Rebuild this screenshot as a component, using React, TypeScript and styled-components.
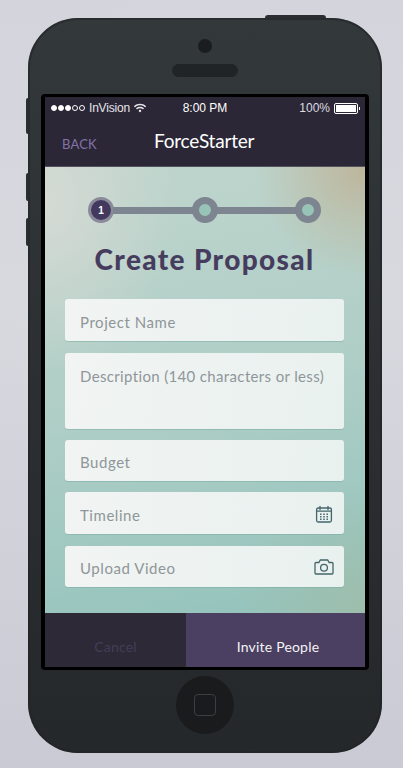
import styled, { createGlobalStyle } from "styled-components";
import { FaWifi } from "react-icons/fa";

const GlobalStyle = createGlobalStyle`
  html, body {
    margin: 0;
    padding: 0;
    background: #d0d1d9;
  }
  * {
    box-sizing: border-box;
  }
`;

const Page = styled.div`
  width: 403px;
  height: 768px;
  overflow: hidden;
  padding: 18px 21px 15px 28px;
  background:
    radial-gradient(ellipse at 50% 45%, rgba(255, 255, 255, 0.12), rgba(255, 255, 255, 0) 70%),
    linear-gradient(180deg, #d4d5dc 0%, #d8d9df 40%, #c9cad3 100%);
`;

const Phone = styled.div`
  position: relative;
  width: 354px;
  height: 735px;
  border-radius: 50px;
  background: linear-gradient(180deg, #33383a 0%, #2c3032 45%, #25282a 100%);
  box-shadow: inset 0 0 0 2px rgba(31, 34, 36, 0.55);
  display: flex;
  flex-direction: column;
  align-items: center;
`;

const TopButton = styled.div`
  position: absolute;
  top: -3px;
  left: 237px;
  width: 61px;
  height: 3px;
  border-radius: 3px 3px 0 0;
  background: #2a2e30;
`;

const SideButton = styled.div<{ $top: number; $height: number }>`
  position: absolute;
  left: -2px;
  top: ${(p) => p.$top}px;
  width: 2px;
  height: ${(p) => p.$height}px;
  border-radius: 2px 0 0 2px;
  background: #2a2e30;
`;

const Earpiece = styled.div`
  height: 76px;
  width: 100%;
  flex: none;
  padding-top: 21px;
  display: flex;
  flex-direction: column;
  align-items: center;
  gap: 11px;
`;

const Camera = styled.div`
  width: 14px;
  height: 14px;
  border-radius: 50%;
  background: #1a1d1f;
`;

const Speaker = styled.div`
  width: 66px;
  height: 13px;
  border-radius: 7px;
  background: #212426;
`;

const Screen = styled.div`
  width: 328px;
  height: 576px;
  flex: none;
  padding: 3px 4px;
  border-radius: 4px;
  background: #000;
  display: flex;
  flex-direction: column;
`;

const Header = styled.div`
  height: 70px;
  flex: none;
  background: #2b2736;
  border-bottom: 1px solid #55525f;
  color: #fff;
  display: flex;
  flex-direction: column;
`;

const StatusBar = styled.div`
  height: 22px;
  flex: none;
  display: grid;
  grid-template-columns: 1fr auto 1fr;
  align-items: center;
  padding: 0 5px 0 6px;
  font-family: "Liberation Sans", Arial, sans-serif;
  font-size: 12px;
  color: #e6e5ea;
`;

const StatusLeft = styled.div`
  display: flex;
  align-items: center;
  gap: 4px;
  font-weight: 300;
  letter-spacing: -0.2px;
`;

const Signal = styled.div`
  display: flex;
  gap: 1px;
`;

const Dot = styled.span<{ $filled?: boolean }>`
  width: 6px;
  height: 6px;
  border-radius: 50%;
  border: 1px solid #fff;
  background: ${(p) => (p.$filled ? "#fff" : "transparent")};
`;

const StatusTime = styled.div`
  color: #fff;
  margin-left: -1px;
`;

const StatusRight = styled.div`
  display: flex;
  align-items: center;
  justify-content: flex-end;
  gap: 4px;
  color: #dcdbe0;
`;

const Battery = styled.div`
  position: relative;
  width: 24px;
  height: 11px;
  border: 1px solid #fff;
  border-radius: 2px;
  padding: 1px;
  margin-right: 2px;

  &::before {
    content: "";
    display: block;
    height: 100%;
    background: #fff;
  }

  &::after {
    content: "";
    position: absolute;
    right: -3px;
    top: 3px;
    width: 1px;
    height: 3px;
    background: #fff;
  }
`;

const NavBar = styled.div`
  flex: 1;
  display: flex;
  align-items: center;
  padding: 0 0 4px 17px;
`;

const BackLink = styled.span`
  width: 92px;
  padding-top: 7px;
  font-family: Lato, sans-serif;
  font-size: 13px;
  color: #8273a8;
  letter-spacing: 0.2px;
`;

const Logo = styled.span`
  font-family: Lato, sans-serif;
  font-size: 19px;
  line-height: 1;
  color: #fff;
  letter-spacing: -0.2px;
`;

const Content = styled.div`
  flex: 1;
  display: flex;
  flex-direction: column;
  align-items: center;
  padding: 30px 21px 0 20px;
  background:
    radial-gradient(circle at 100% 0%, rgba(190, 178, 150, 0.9) 0, rgba(190, 178, 150, 0) 110px),
    radial-gradient(ellipse at 0% 8%, rgba(214, 218, 212, 0.95) 0, rgba(214, 218, 212, 0) 130px),
    radial-gradient(circle at 100% 100%, rgba(160, 188, 168, 0.8) 0, rgba(160, 188, 168, 0) 130px),
    linear-gradient(168deg, #bfd5cd 0%, #b1cfc7 45%, #93c3bc 100%);
`;

const Stepper = styled.div`
  width: 233px;
  height: 26px;
  display: flex;
  align-items: center;
`;

const StepLine = styled.div`
  flex: 1;
  height: 7px;
  margin: 0 -1px;
  background: #7d8590;
`;

const Step = styled.div<{ $active?: boolean }>`
  width: 26px;
  height: 26px;
  flex: none;
  border-radius: 50%;
  border: ${(p) => (p.$active ? "3px solid #8a8a9b" : "7px solid #7d8590")};
  background: ${(p) => (p.$active ? "#43395f" : "#98c4b8")};
  color: #fff;
  font-family: "Liberation Sans", Arial, sans-serif;
  font-size: 10px;
  font-weight: 700;
  display: flex;
  align-items: center;
  justify-content: center;
`;

const Title = styled.h1`
  margin: 19px 0 22px;
  height: 35px;
  font-family: Lato, sans-serif;
  font-size: 28px;
  line-height: 35px;
  font-weight: 900;
  letter-spacing: 1.35px;
  color: #463d5e;
  white-space: nowrap;
`;

const Fields = styled.div`
  width: 100%;
  display: flex;
  flex-direction: column;
`;

const Field = styled.div<{ $height?: number; $gap?: number; $top?: boolean }>`
  height: ${(p) => p.$height ?? 42}px;
  margin-bottom: ${(p) => p.$gap ?? 11}px;
  padding: ${(p) => (p.$top ? "13px" : "3px")} 10px 0 15px;
  border-radius: 3px;
  background: linear-gradient(100deg, #f1f4f3, #e9f1ef);
  box-shadow: 0 1px 0 rgba(120, 170, 160, 0.5);
  display: flex;
  align-items: ${(p) => (p.$top ? "flex-start" : "center")};
  justify-content: space-between;
  font-family: Lato, sans-serif;
  font-size: 15px;
  line-height: 20px;
  letter-spacing: ${(p) => (p.$top ? "0.35px" : "0.55px")};
  color: #8f9699;
`;

const FieldIcon = styled.svg`
  width: 20px;
  height: 20px;
  flex: none;
  fill: none;
  stroke: #44666b;
  stroke-width: 1.3;
  stroke-linejoin: round;
  stroke-linecap: round;
`;

const Footer = styled.div`
  height: 54px;
  flex: none;
  display: flex;
  font-family: Lato, sans-serif;
  font-size: 14px;
`;

const FooterButton = styled.div<{ $primary?: boolean }>`
  width: ${(p) => (p.$primary ? 179 : 141)}px;
  padding: 12px 0 0 ${(p) => (p.$primary ? 5 : 0)}px;
  display: flex;
  align-items: center;
  justify-content: center;
  background: ${(p) => (p.$primary ? "#4b4061" : "#2d2937")};
  color: ${(p) => (p.$primary ? "#f4f3f6" : "#433e58")};
  letter-spacing: 0.2px;
`;

const HomeArea = styled.div`
  flex: 1;
  display: flex;
  align-items: center;
  justify-content: center;
  padding-bottom: 13px;
`;

const HomeButton = styled.div`
  width: 58px;
  height: 58px;
  border-radius: 50%;
  background: #191b1d;
  display: flex;
  align-items: center;
  justify-content: center;
`;

const HomeSquare = styled.div`
  width: 22px;
  height: 22px;
  border-radius: 4px;
  border: 1px solid #3c3f41;
`;

function CalendarIcon() {
  return (
    <FieldIcon viewBox="0 0 20 20">
      <rect x="2.6" y="3" width="14.8" height="14" rx="1.5" />
      <path d="M2.6 6.200h14.800M6 1.500v3M14 1.500v3" />
      <path
        d="M6.800 8.500v1.500M10 8.500v1.500M13.200 8.500v1.500M6.800 11v1.500M10 11v1.500M13.200 11v1.500M6.800 13.500v1.500M10 13.500v1.500M13.200 13.500v1.500"
        strokeWidth="1.500"
        strokeLinecap="butt"
      />
    </FieldIcon>
  );
}

function CameraIcon() {
  return (
    <FieldIcon viewBox="0 0 20 20">
      <path d="M2 4.500h3l1.200-2.500h7.600l1.200 2.500h3a1 1 0 0 1 1 1v9.500a1 1 0 0 1-1 1H2a1 1 0 0 1-1-1V5.500a1 1 0 0 1 1-1z" />
      <circle cx="10" cy="9.800" r="3.400" />
    </FieldIcon>
  );
}

export default function App() {
  return (
    <Page>
      <GlobalStyle />
      <Phone>
        <TopButton />
        <SideButton $top={80} $height={36} />
        <SideButton $top={155} $height={28} />
        <SideButton $top={200} $height={28} />
        <Earpiece>
          <Camera />
          <Speaker />
        </Earpiece>
        <Screen>
          <Header>
            <StatusBar>
              <StatusLeft>
                <Signal>
                  <Dot $filled />
                  <Dot $filled />
                  <Dot $filled />
                  <Dot />
                  <Dot />
                </Signal>
                InVision
                <FaWifi size={12} />
              </StatusLeft>
              <StatusTime>8:00 PM</StatusTime>
              <StatusRight>
                100%
                <Battery />
              </StatusRight>
            </StatusBar>
            <NavBar>
              <BackLink>BACK</BackLink>
              <Logo>ForceStarter</Logo>
            </NavBar>
          </Header>
          <Content>
            <Stepper>
              <Step $active>1</Step>
              <StepLine />
              <Step />
              <StepLine />
              <Step />
            </Stepper>
            <Title>Create Proposal</Title>
            <Fields>
              <Field $gap={12}>Project Name</Field>
              <Field $height={76} $top>
                Description (140 characters or less)
              </Field>
              <Field $height={41}>Budget</Field>
              <Field $gap={12}>
                Timeline
                <CalendarIcon />
              </Field>
              <Field $height={41}>
                Upload Video
                <CameraIcon />
              </Field>
            </Fields>
          </Content>
          <Footer>
            <FooterButton>Cancel</FooterButton>
            <FooterButton $primary>Invite People</FooterButton>
          </Footer>
        </Screen>
        <HomeArea>
          <HomeButton>
            <HomeSquare />
          </HomeButton>
        </HomeArea>
      </Phone>
    </Page>
  );
}
